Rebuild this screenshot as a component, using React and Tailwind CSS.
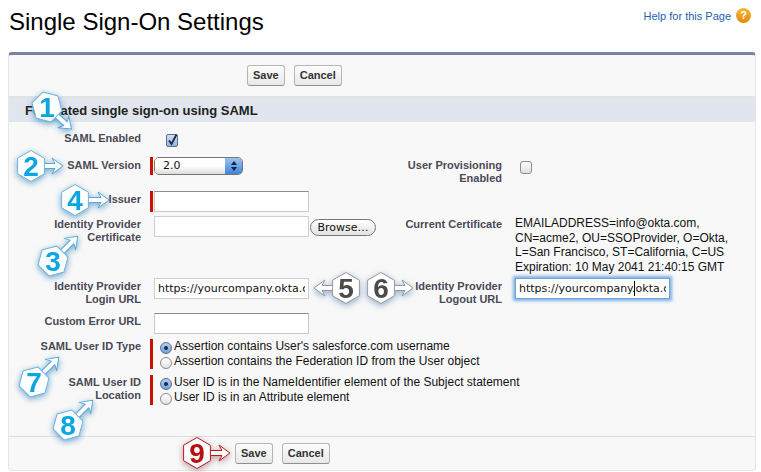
const FONT = "font-['Liberation_Sans',Arial,sans-serif]";

function Btn({ children }) {
  return (
    <button className="h-[21px] px-[5px] rounded-[3px] border border-[#b5b5b5] border-b-[#8f8f8f] bg-gradient-to-b from-[#fdfdfd] to-[#e8e8e9] text-[11px] font-bold text-[#333] leading-none">
      {children}
    </button>
  );
}

function Label({ children, pt = "pt-[2px]" }) {
  return <div className={`text-right text-[11px] leading-[13px] font-bold text-[#4a4a56] ${pt}`}>{children}</div>;
}

function TextBox({ value = "", empty = false, focus = false, w = "w-[155px]" }) {
  return (
    <div className={`relative ${w} h-[21px]`}>
      <input
        readOnly
        value={value}
        className={`block w-full h-full bg-white px-[3px] text-[11px] font-['DejaVu_Sans',sans-serif] text-[#111] outline-none border ${
          focus
            ? "border-[#6aa5e0] shadow-[0_0_3px_2px_rgba(90,150,220,0.75)]"
            : empty
              ? "border-[#c9c9c9] border-t-[#8d8d8d]"
              : "border-[#cfcfcf]"
        }`}
      />
      {focus && <div className="absolute left-[119px] top-[3px] w-px h-[15px] bg-black" />}
    </div>
  );
}

function Radio({ on }) {
  return (
    <span
      className={`inline-flex items-center justify-center shrink-0 w-[12px] h-[12px] rounded-full border ${
        on ? "border-[#5c6f8f] bg-gradient-to-b from-[#b5d0ef] to-[#6fa3de]" : "border-[#8c8c8c] bg-gradient-to-b from-[#fff] to-[#e2e2e2]"
      }`}
    >
      {on && <span className="w-[4px] h-[4px] rounded-full bg-[#1a2a44]" />}
    </span>
  );
}

function RadioGroup({ items }) {
  return (
    <div className="flex flex-col h-[30px] border-l-[3px] border-[#cc1100] pl-[7px] text-[12px] leading-[15px] text-[#111]">
      {items.map((t, i) => (
        <div key={t} className="flex items-center gap-[2px] h-[15px] whitespace-nowrap">
          <span className="relative top-[1px] flex">
            <Radio on={i === 0} />
          </span>
          <span>{t}</span>
        </div>
      ))}
    </div>
  );
}

function Badge({ className, num, angle = 0, len = 32, hexRot = 0, tone = "blue" }) {
  const tones = {
    blue: { hex: "#6fb6dd", arrow: "#5aa8d8", text: "#0aa5e2", glow: "drop-shadow-[0_2px_3px_rgba(20,110,180,0.6)]" },
    gray: { hex: "#9a9a9a", arrow: "#8f9aa3", text: "#4b4b4b", glow: "drop-shadow-[0_2px_3px_rgba(40,100,160,0.5)]" },
    red: { hex: "#c01818", arrow: "#c01818", text: "#b80f0f", glow: "drop-shadow-[0_2px_3px_rgba(120,60,60,0.5)]" },
  }[tone];
  const r = 15.5;
  const pts = [0, 60, 120, 180, 240, 300]
    .map((a) => {
      const t = ((a - 90) * Math.PI) / 180;
      return `${(r * Math.cos(t)).toFixed(1)},${(r * Math.sin(t)).toFixed(1)}`;
    })
    .join(" ");
  const arrow = `M8,-2.5 H${len - 8} L${len - 11},-8 L${len},0 L${len - 11},8 L${len - 8},2.5 H8 Z`;
  return (
    <div className={`absolute w-0 h-0 ${className}`}>
      <svg width="120" height="120" viewBox="-60 -60 120 120" className={`absolute -left-[60px] -top-[60px] overflow-visible ${tones.glow}`}>
        <path d={arrow} transform={`rotate(${angle})`} fill="#fff" stroke={tones.arrow} strokeWidth="1" strokeLinejoin="round" />
        <g transform={`rotate(${hexRot})`}>
          <polygon points={pts} fill="#fff" stroke={tones.hex} strokeWidth="1" strokeLinejoin="round" />
        </g>
        <text x="0" y="10" textAnchor="middle" fontFamily="'Liberation Sans',Arial,sans-serif" fontWeight="700" fontSize="28" fill={tones.text}>
          {num}
        </text>
      </svg>
    </div>
  );
}

export default function App() {
  return (
    <div className={`relative w-[761px] h-[472px] overflow-hidden bg-white ${FONT}`}>
      <div className="flex justify-between h-[52px] pl-[9px] pr-[10px]">
        <h1 className="text-[24px] leading-[44px] text-black font-normal">Single Sign-On Settings</h1>
        <div className="flex items-start gap-[5px] pt-[8px]">
          <span className="text-[11px] leading-[17px] text-[#1a5fb0]">Help for this Page</span>
          <span className="flex items-center justify-center w-[15px] h-[15px] rounded-full bg-gradient-to-b from-[#f7b733] to-[#e08a00] text-white text-[11px] font-bold leading-none">?</span>
        </div>
      </div>

      <div className="mx-[8px] w-[748px] h-[419px] flex flex-col bg-[#f8f8f8] border border-[#e6e6e6] border-t-[3px] border-t-[#7a82a0] rounded-[4px]">
        <div className="flex justify-start gap-[9px] h-[43px] pt-[10px] pl-[238px] border-b-2 border-[#e3e3e3]">
          <Btn>Save</Btn>
          <Btn>Cancel</Btn>
        </div>
        <div className="h-[24px] bg-[#e1e5ee] pl-[16px] text-[13px] font-bold leading-[26px] text-[#222]">Federated single sign-on using SAML</div>

        <div className="grid grid-cols-[132px_238px_123px_1fr] grid-rows-[35px_34px_25px_62px_35px_26px_36px_62px] h-[315px] border-b border-[#dedede]">
          <Label pt="pt-[10px]">SAML Enabled</Label>
          <div className="pl-[25px] pt-[12px]">
            <span className="flex items-center justify-center w-[12px] h-[13px] rounded-[2px] border border-[#5c6f8f] bg-gradient-to-b from-[#cfe0f4] to-[#8fb5e2]">
              <svg width="13" height="13" viewBox="0 0 13 13" className="overflow-visible">
                <path d="M3 6.5 L5.5 10 L10.5 0.5" fill="none" stroke="#1d2a44" strokeWidth="1.8" />
              </svg>
            </span>
          </div>
          <div />
          <div />

          <Label>SAML Version</Label>
          <div className="pl-[9px]">
            <div className="flex h-[18px] border-l-[3px] border-[#cc1100] pl-[1px]">
              <div className="flex w-[89px] h-[18px] rounded-[5px] border border-[#777] overflow-hidden text-[12px] leading-[16px]">
                <div className="flex-1 pl-[8px] bg-gradient-to-b from-[#fff] via-[#fff] to-[#dcdcdc] text-[#111] font-['DejaVu_Sans',sans-serif] text-[11px]">2.0</div>
                <div className="flex flex-col items-center justify-center gap-[2px] w-[17px] bg-gradient-to-b from-[#9cc3ef] to-[#3e83d8]">
                  <span className="w-0 h-0 border-x-[3px] border-x-transparent border-b-[4px] border-b-[#10233f]" />
                  <span className="w-0 h-0 border-x-[3px] border-x-transparent border-t-[4px] border-t-[#10233f]" />
                </div>
              </div>
            </div>
          </div>
          <Label>User Provisioning<br />Enabled</Label>
          <div className="pl-[18px] pt-[4px]">
            <span className="block w-[12px] h-[13px] rounded-[3px] border border-[#8c8c8c] bg-gradient-to-b from-[#fff] to-[#dedede]" />
          </div>

          <Label>Issuer</Label>
          <div className="pl-[9px]">
            <div className="flex border-l-[3px] border-[#cc1100] pl-[1px] w-fit">
              <TextBox empty />
            </div>
          </div>
          <div />
          <div />

          <Label>Identity Provider<br />Certificate</Label>
          <div className="pl-[13px] flex items-start gap-[1px]">
            <TextBox />
            <button className="mt-[3px] ml-[0px] w-[66px] h-[17px] rounded-full border border-[#777] bg-gradient-to-b from-[#fff] to-[#e2e2e2] text-[11px] leading-none font-['DejaVu_Sans',sans-serif] text-[#111]">Browse…</button>
          </div>
          <Label>Current Certificate</Label>
          <div className="pl-[13px] text-[12px] leading-[14.6px] text-[#111] whitespace-nowrap">
            EMAILADDRESS=info@okta.com,<br />
            CN=acme2, OU=SSOProvider, O=Okta,<br />
            L=San Francisco, ST=California, C=US<br />
            Expiration: 10 May 2041 21:40:15 GMT
          </div>

          <Label>Identity Provider<br />Login URL</Label>
          <div className="pl-[13px]"><TextBox value="https://yourcompany.okta.com/app" /></div>
          <Label>Identity Provider<br />Logout URL</Label>
          <div className="pl-[13px]"><TextBox focus value="https://yourcompany.okta.com/app" /></div>

          <Label>Custom Error URL</Label>
          <div className="pl-[13px]"><TextBox empty /></div>
          <div />
          <div />

          <Label pt="pt-[1px]">SAML User ID Type</Label>
          <div className="pl-[9px] col-span-3">
            <RadioGroup items={["Assertion contains User's salesforce.com username", "Assertion contains the Federation ID from the User object"]} />
          </div>

          <Label pt="pt-[1px]">SAML User ID<br />Location</Label>
          <div className="pl-[9px] col-span-3">
            <RadioGroup items={["User ID is in the NameIdentifier element of the Subject statement", "User ID is in an Attribute element"]} />
          </div>
        </div>

        <div className="flex justify-start gap-[9px] pt-[6px] pl-[226px]">
          <Btn>Save</Btn>
          <Btn>Cancel</Btn>
        </div>
      </div>

      <Badge className="left-[47px] top-[107px]" num="1" angle={42} len={33} hexRot={-15} />
      <Badge className="left-[31px] top-[166px]" num="2" len={32} />
      <Badge className="left-[75px] top-[200px]" num="4" len={34} />
      <Badge className="left-[53px] top-[261px]" num="3" angle={-45} len={35} hexRot={15} />
      <Badge className="left-[346px] top-[288px]" num="5" tone="gray" angle={180} len={32} />
      <Badge className="left-[381px] top-[288px]" num="6" tone="gray" len={32} />
      <Badge className="left-[34px] top-[382px]" num="7" angle={-45} len={35} hexRot={15} />
      <Badge className="left-[68px] top-[425px]" num="8" angle={-45} len={35} hexRot={15} />
      <Badge className="left-[197px] top-[453px]" num="9" tone="red" len={33} />
    </div>
  );
}
